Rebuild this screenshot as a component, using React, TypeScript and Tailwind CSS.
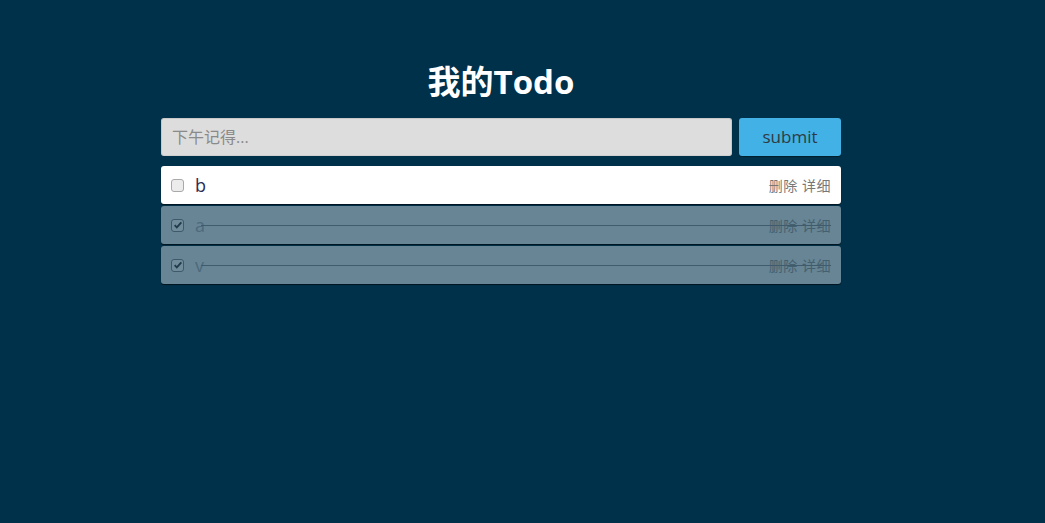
import { useState } from 'react';

type Todo = { id: number; text: string; done: boolean };

const FONT = { fontFamily: '"Open Sans", "Noto Sans CJK SC", sans-serif' };

function Check({ checked, onToggle }: { checked: boolean; onToggle: () => void }) {
  return (
    <button
      onClick={onToggle}
      className={
        'flex h-[13px] w-[13px] items-center justify-center rounded-[3px] border ' +
        (checked ? 'border-[#3d5a6c] bg-[#708b9a]' : 'border-[#a9a9a9] bg-[#ececec]')
      }
    >
      {checked && (
        <svg viewBox="0 0 12 12" className="h-[10px] w-[10px]">
          <path d="M2 6.2 L4.6 8.8 L10 2.8" fill="none" stroke="#1f3a4b" strokeWidth="2.2" />
        </svg>
      )}
    </button>
  );
}

function TodoRow({ todo, onToggle }: { todo: Todo; onToggle: () => void }) {
  const done = todo.done;
  return (
    <li
      className={
        'flex h-[38px] items-center rounded-[3px] pl-[10px] pr-[10px] shadow-[0_1px_1px_rgba(0,0,0,0.6)] ' +
        (done ? 'bg-[#688595]' : 'bg-white')
      }
    >
      <Check checked={done} onToggle={onToggle} />
      <div className="relative ml-[11px] flex flex-1 items-center">
        <span className={'text-[18px] ' + (done ? 'text-[#4d6a7d]' : 'text-[#2b2d58]')}>{todo.text}</span>
        <span className={'ml-auto text-[14px] tracking-[0.5px] ' + (done ? 'text-[#44606f]' : 'text-[#777]')}>删除 详细</span>
        {done && <div className="absolute left-[6px] right-0 top-1/2 h-px bg-[#3f5c6e]" />}
      </div>
    </li>
  );
}

export default function App() {
  const [todos, setTodos] = useState<Todo[]>([
    { id: 1, text: 'b', done: false },
    { id: 2, text: 'a', done: true },
    { id: 3, text: 'v', done: true },
  ]);

  return (
    <div className="min-h-[523px] bg-[#00314a]" style={FONT}>
      <div className="ml-[161px] w-[680px] pt-[58px]">
        <h1 className="text-center text-[33px] font-bold leading-[48px] text-white">我的Todo</h1>
        <div className="mt-[12px] flex gap-[7px]">
          <input
            placeholder="下午记得..."
            className="h-[38px] flex-1 rounded-[3px] border border-[#c8c8c8] border-b-[#d0d0d0] bg-[#dddddd] px-[10px] text-[16px] text-[#333] outline-none placeholder:text-[#8a8a8a]"
          />
          <button className="h-[38px] w-[102px] rounded-[3px] bg-[#42b1e5] text-[17px] text-[#2f3b44] shadow-[0_1px_1px_rgba(0,0,0,0.4)]">
            submit
          </button>
        </div>
        <ul className="mt-[10px] flex flex-col gap-[2px]">
          {todos.map((t) => (
            <TodoRow
              key={t.id}
              todo={t}
              onToggle={() => setTodos((list) => list.map((x) => (x.id === t.id ? { ...x, done: !x.done } : x)))}
            />
          ))}
        </ul>
      </div>
    </div>
  );
}
